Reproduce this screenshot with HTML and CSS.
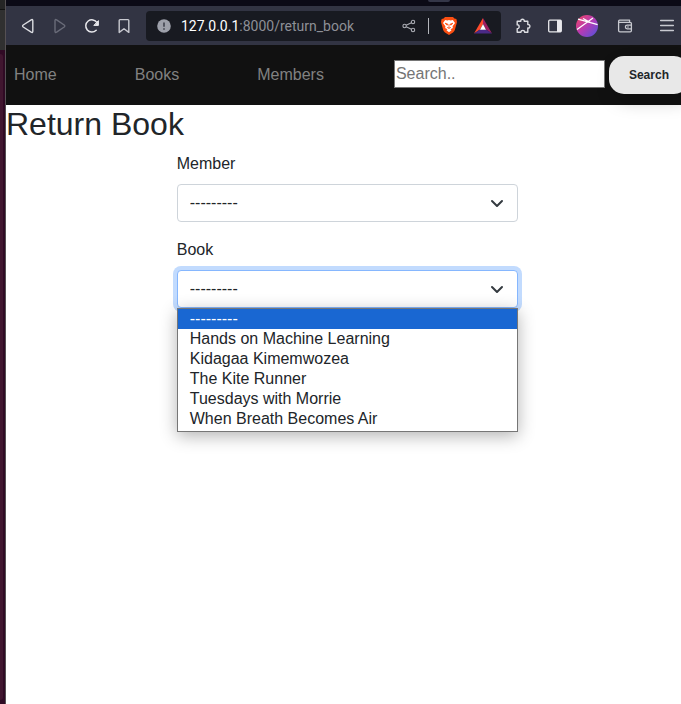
FILE: index.html
```html
<!DOCTYPE html>
<html lang="en">
<head>
<meta charset="utf-8">
<title>Return Book</title>
<link rel="stylesheet" href="styles.css">
</head>
<body>
<div class="desktop">
  <div class="dock"><div class="dock-top"></div><div class="dock-edge"></div></div>
  <div class="window">
    <div class="tabstrip"><div class="tab-hint"></div></div>
    <div class="toolbar">
      <button class="tool" type="button" aria-label="Back">
        <svg width="20" height="20" viewBox="0 0 20 20" fill="none" stroke="#dcdde2" stroke-width="1.4" stroke-linejoin="round"><path d="M13.2 3.8Q14.8 3 14.8 4.8V15.2Q14.8 17 13.2 16.2L5.2 11Q4 10 5.2 9Z"/></svg>
      </button>
      <button class="tool" type="button" aria-label="Forward">
        <svg width="20" height="20" viewBox="0 0 20 20" fill="none" stroke="#6a6c79" stroke-width="1.4" stroke-linejoin="round"><path d="M6.6 3.8Q5 3 5 4.8V15.2Q5 17 6.6 16.2L14.2 11Q15.4 10 14.2 9Z"/></svg>
      </button>
      <button class="tool" type="button" aria-label="Reload">
        <svg width="20" height="20" viewBox="0 0 20 20" fill="none" stroke="#e8e8ec" stroke-width="1.5" stroke-linecap="round"><path d="M14.2 14.2A6.1 6.1 0 1 1 15 6.6"/><path d="M16.4 5V9.4H12.2Z" fill="#e8e8ec" stroke-width="1" stroke-linejoin="round"/></svg>
      </button>
      <button class="tool" type="button" aria-label="Bookmark">
        <svg width="20" height="20" viewBox="0 0 20 20" fill="none" stroke="#c8c9d0" stroke-width="1.4" stroke-linejoin="round"><path d="M5.2 4.4Q5.2 3.6 6 3.6H14Q14.8 3.6 14.8 4.4V16.4L10 12.8L5.2 16.4Z"/></svg>
      </button>
      <div class="address">
        <svg width="14" height="14" viewBox="0 0 14 14"><circle cx="7" cy="7" r="6.8" fill="#9da0aa"/><path d="M7 3.4V7.8M7 9.2V10.8" stroke="#4a4d58" stroke-width="1.8"/></svg>
        <span class="url"><span class="host">127.0.0.1</span>:8000/return_book</span>
        <svg width="14" height="14" viewBox="0 0 14 14" fill="none" stroke="#aaacb3" stroke-width="1.1"><circle cx="2.6" cy="7" r="1.7"/><circle cx="11" cy="3" r="1.7"/><circle cx="11" cy="11" r="1.7"/><path d="M4.2 6.3L9.4 3.8M4.2 7.7L9.4 10.2"/></svg>
        <span class="divider"></span>
        <svg width="18" height="20" viewBox="0 0 18 20"><path d="M5 1H13L14.4 2.6L16.4 3L17 6L16.5 8L14.8 14Q14.4 15.4 13 16.4L9 19L5 16.4Q3.6 15.4 3.2 14L1.5 8L1 6L1.6 3L3.6 2.6Z" fill="#fb4f12"/><path d="M5.2 4L7.4 4.4L9 4L10.6 4.4L12.8 4L15 7L12.6 10.2L12.8 12L10.5 13.3L11.5 14.2L9 16.2L6.5 14.2L7.5 13.3L5.2 12L5.4 10.2L3 7Z" fill="#fff"/><path d="M5 7.2L7.7 8L7.2 9.2ZM13 7.2L10.3 8L10.8 9.2ZM9 8V11.2M7.1 11.4L9 12.4L10.9 11.4" fill="#fb4f12" stroke="#fb4f12" stroke-width=".8"/></svg>
        <svg class="rewards" width="18" height="16" viewBox="0 0 18 16"><path d="M9 0L0 15.5L6 11.5L9 6Z" fill="#ff4b2b"/><path d="M9 0L18 15.5L12 11.5L9 6Z" fill="#9e1f63"/><path d="M0 15.5H18L12 11.5H6Z" fill="#4b2a86"/><path d="M9 6L12 11.7H6Z" fill="#fff"/></svg>
      </div>
      <button class="tool" type="button" aria-label="Extensions">
        <svg width="20" height="20" viewBox="0 0 20 20" fill="none" stroke="#dcdde2" stroke-width="1.4" stroke-linejoin="round"><path d="M4.2 5.2H7.8C7.2 2.6 11.8 2.6 11.2 5.2H14.8V8.6C17.6 8 17.6 12.6 14.8 12V16.2H11.6C12 13.8 7.6 13.8 8 16.2H4.2V12.6C6.8 13 6.8 8.4 4.2 8.8Z"/></svg>
      </button>
      <button class="tool" type="button" aria-label="Sidebar">
        <svg width="20" height="20" viewBox="0 0 20 20"><rect x="3.7" y="4.2" width="12.6" height="11.6" rx="1" fill="none" stroke="#e8e8ec" stroke-width="1.3"/><path d="M12 4H16V16H12Z" fill="#e8e8ec"/></svg>
      </button>
      <button class="tool" type="button" aria-label="Profile">
        <svg width="22" height="22" viewBox="0 0 22 22"><defs><linearGradient id="orb" x1="0" y1="0" x2="1" y2="1"><stop offset="0" stop-color="#f4455f"/><stop offset=".5" stop-color="#b33bb5"/><stop offset="1" stop-color="#4c55de"/></linearGradient></defs><circle cx="11" cy="11" r="11" fill="url(#orb)"/><path d="M2 4.2L21.6 9.6M1 14.4L17 3M7 3.4L14.5 7.6" stroke="#fff" stroke-width="1.2"/></svg>
      </button>
      <button class="tool wallet" type="button" aria-label="Wallet">
        <svg width="20" height="20" viewBox="0 0 20 20" fill="none" stroke="#c8c9d0" stroke-width="1.3" stroke-linejoin="round"><path d="M14.6 6.4V4.2H4.6Q3.6 4.2 3.6 5.2V14.4Q3.6 15.8 5 15.8H15.2Q16.4 15.8 16.4 14.6V7.6Q16.4 6.4 15.2 6.4H4.2"/><path d="M16.4 9.2H12.2Q10.4 9.2 10.4 11T12.2 12.8H16.4M12.4 11H13.6"/></svg>
      </button>
      <button class="tool menu-button" type="button" aria-label="Menu">
        <svg width="20" height="20" viewBox="0 0 20 20" stroke="#c8c9d0" stroke-width="1.3" stroke-linecap="round"><path d="M3.6 4.5H16.4M3.6 9.5H16.4M3.6 14.5H16.4"/></svg>
      </button>
    </div>
    <nav class="navbar">
      <a href="#home">Home</a>
      <a href="#books">Books</a>
      <a href="#members">Members</a>
      <form class="search">
        <input type="text" placeholder="Search.." aria-label="Search">
        <button type="button">Search</button>
      </form>
    </nav>
    <main>
      <h1>Return Book</h1>
      <form class="return-form">
        <div class="field">
          <label for="member">Member</label>
          <div class="picker">
            <select id="member"><option>---------</option></select>
            <svg class="chevron" width="16" height="16" viewBox="0 0 16 16"><path d="M3 6L8 11L13 6"/></svg>
          </div>
        </div>
        <div class="field">
          <label for="book">Book</label>
          <div class="picker open">
            <select id="book"><option>---------</option></select>
            <svg class="chevron" width="16" height="16" viewBox="0 0 16 16"><path d="M3 6L8 11L13 6"/></svg>
            <ul class="options" role="listbox" aria-label="Book">
              <li role="option" aria-selected="true">---------</li>
              <li role="option">Hands on Machine Learning</li>
              <li role="option">Kidagaa Kimemwozea</li>
              <li role="option">The Kite Runner</li>
              <li role="option">Tuesdays with Morrie</li>
              <li role="option">When Breath Becomes Air</li>
            </ul>
          </div>
        </div>
      </form>
    </main>
  </div>
</div>
</body>
</html>
```
FILE: styles.css
```css
* { box-sizing: border-box; }
body {
  margin: 0;
  background: #fff;
  color: #212529;
  font: 16px/24px "Liberation Sans", Arial, sans-serif;
}
button, input, select { font: inherit; color: inherit; }
svg { display: block; flex: none; }

.desktop { display: flex; min-height: 100vh; overflow: hidden; }
.dock {
  flex: none;
  display: flex;
  flex-direction: column;
  width: 6px;
  background: #300a24;
  border-right: 1px solid #555053;
}
.dock-top { height: 50px; background: linear-gradient(#252525 9px, #111 9px, #111 10px, #303030 10px); }
.dock-edge { flex: 1; margin: 4px 2px 4px 0; border-radius: 0 3px 3px 0; background: #40162f; }

/* The window runs slightly past the right edge of the screen. */
.window { flex: none; width: calc(100% + 2px); }

.tabstrip { display: flex; height: 6px; padding-left: 422px; background: #0b0a16; }
.tab-hint { width: 22px; height: 2px; border-radius: 0 0 8px 8px; background: #343648; }

.toolbar { display: flex; align-items: center; height: 39px; padding: 0 6px; background: #323443; }
.tool {
  flex: none;
  display: flex;
  align-items: center;
  justify-content: center;
  width: 32px;
  height: 32px;
  padding: 0;
  border: 0;
  background: none;
}
.wallet { margin-left: 6px; }
.menu-button { margin-left: 10px; }
.address {
  flex: 1;
  display: flex;
  align-items: center;
  height: 30px;
  margin: 0 6px;
  padding: 0 9px 0 11px;
  border-radius: 4px;
  background: #181a21;
}
.url {
  flex: 1;
  margin-left: 10px;
  color: #8e9097;
  font: 14px/20px Roboto, "Noto Sans", sans-serif;
  white-space: nowrap;
}
.host { color: #fff; }
.divider { width: 1px; height: 16px; margin: 0 11px 0 12px; background: #b4b6bc; }
.rewards { margin-left: 16px; }

.navbar {
  display: flex;
  align-items: center;
  justify-content: space-between;
  height: 60px;
  background: #111;
}
.navbar a { padding: 8px; color: #818181; text-decoration: none; }
.search { display: flex; align-items: baseline; gap: 4px; }
.search input {
  width: 211px;
  height: 28px;
  padding: 1px;
  border: 1px solid #767676;
  border-radius: 0;
  background: #fff;
}
.search input::placeholder { color: #757575; opacity: 1; }
.search button {
  height: 38px;
  padding: 0 20px;
  border: 0;
  border-radius: 15px;
  background: #e8e8e8;
  box-shadow: 4px 8px 19px -3px rgba(0, 0, 0, 0.27);
  font-size: 12px;
  font-weight: 700;
}

h1 { margin: 0 0 8px; font-size: 32px; font-weight: 400; line-height: 39px; }
.return-form { width: 50%; margin: 0 auto; }
.field { margin-bottom: 16px; }
.field label { display: block; margin-bottom: 8px; }
.picker { position: relative; }
.picker select {
  display: block;
  width: 100%;
  height: 38px;
  padding: 6px 36px 6px 12px;
  border: 1px solid #ced4da;
  border-radius: 4px;
  outline: 0;
  background: #fff;
  appearance: none;
}
.picker.open select { border-color: #86b7fe; box-shadow: 0 0 0 4px #c2dbfe; }
.chevron {
  position: absolute;
  top: 11px;
  right: 13px;
  width: 16px;
  fill: none;
  stroke: #343a40;
  stroke-width: 2;
  stroke-linecap: round;
  stroke-linejoin: round;
  pointer-events: none;
}
.options {
  position: absolute;
  top: 100%;
  left: 0;
  right: 0;
  margin: 0;
  padding: 0 0 2px;
  border: 1px solid #767676;
  background: #fff;
  box-shadow: 0 4px 16px rgba(0, 0, 0, 0.3);
  list-style: none;
}
.options li { padding: 0 12px; line-height: 20px; }
.options li[aria-selected="true"] { background: #1967d2; color: #fff; }
```
